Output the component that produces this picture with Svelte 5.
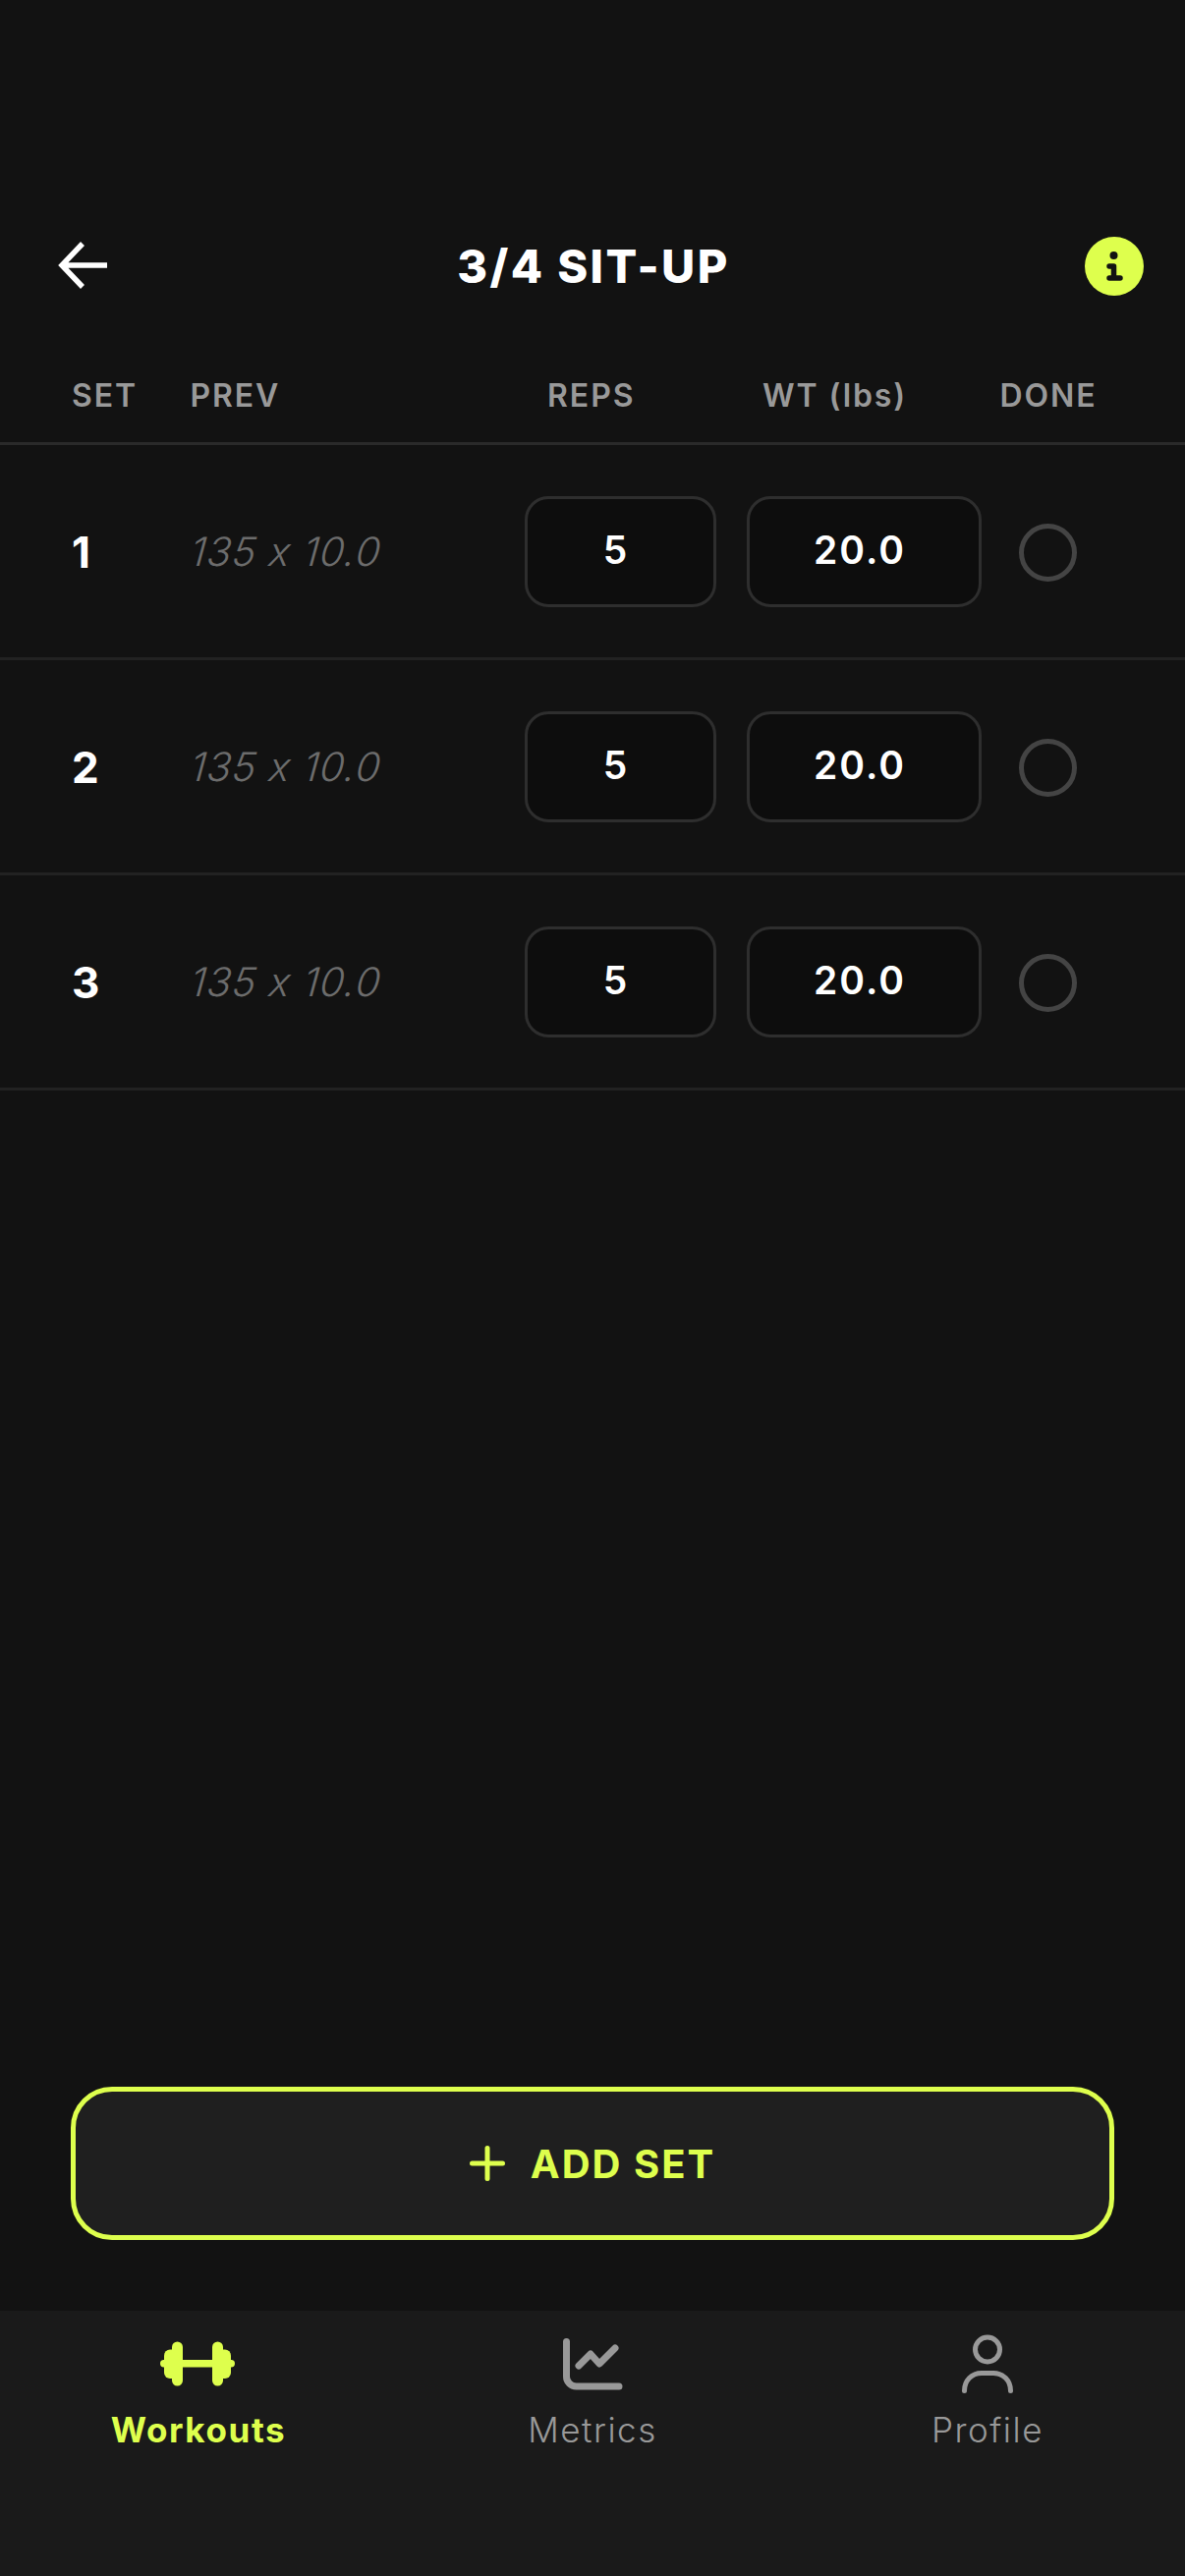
<script lang="ts">
  const sets = [
    { id: 1, prev: '135 x 10.0', reps: '5', weight: '20.0' },
    { id: 2, prev: '135 x 10.0', reps: '5', weight: '20.0' },
    { id: 3, prev: '135 x 10.0', reps: '5', weight: '20.0' },
  ]
</script>

<div class="page">
  <header class="topbar">
    <svg class="back" viewBox="0 0 52 50" width="52" height="50" aria-hidden="true">
      <path d="M51 25H5M26 3 5 25l21 22" />
    </svg>
    <h1>3/4 SIT-UP</h1>
    <svg class="info" viewBox="0 0 60 60" width="60" height="60" aria-hidden="true">
      <circle class="info-bg" cx="30" cy="30" r="30" />
      <circle class="info-dot" cx="29.5" cy="19" r="4" />
      <path class="info-i" d="M25 30h4.500v12M25 42h11" />
    </svg>
  </header>

  <div class="columns">
    <span>SET</span>
    <span>PREV</span>
    <span class="mid">REPS</span>
    <span class="mid">WT (lbs)</span>
    <span class="mid">DONE</span>
  </div>

  {#each sets as set (set.id)}
    <div class="row">
      <span class="num">{set.id}</span>
      <span class="prev">{set.prev}</span>
      <div class="field">{set.reps}</div>
      <div class="field">{set.weight}</div>
      <span class="check"></span>
    </div>
  {/each}

  <div class="spacer"></div>

  <button class="add">
    <svg viewBox="0 0 36 36" width="36" height="36" aria-hidden="true">
      <path d="M18 2.500v31M2.500 18h31" />
    </svg>
    <span>ADD SET</span>
  </button>

  <nav class="tabs">
    <div class="tab active">
      <svg class="icon" viewBox="0 0 76 46" width="76" height="46" aria-hidden="true">
        <rect x="0" y="19" width="76" height="7.500" rx="3.700" />
        <rect x="4" y="8.500" width="14" height="29.500" rx="6" />
        <rect x="12" y="0.500" width="11" height="45" rx="5.500" />
        <rect x="58" y="8.500" width="14" height="29.500" rx="6" />
        <rect x="53" y="0.500" width="11" height="45" rx="5.500" />
      </svg>
      <span>Workouts</span>
    </div>
    <div class="tab">
      <svg class="icon line" viewBox="0 0 66 58" width="66" height="58" aria-hidden="true">
        <path d="M6.500 6.500V42a10 10 0 0 0 10 10H60" />
        <path d="M19 31l12-12 9 10 16-16" />
      </svg>
      <span>Metrics</span>
    </div>
    <div class="tab">
      <svg class="icon profile" viewBox="0 0 60 66" width="60" height="66" aria-hidden="true">
        <circle cx="30" cy="18.500" r="12.500" />
        <path d="M6.500 60.500C6.500 50 14 42.500 24 42.500h12c10 0 17.500 7.500 17.500 18" />
      </svg>
      <span>Profile</span>
    </div>
  </nav>
</div>

<style>
  :global(body) {
    margin: 0;
    background: #121212;
  }
  .page {
    display: flex;
    flex-direction: column;
    height: 2622px;
    background: #121212;
    color: #fff;
    font-family: Inter, 'Liberation Sans', sans-serif;
    font-feature-settings: 'calt' 0;
    overflow: hidden;
  }
  .topbar {
    display: flex;
    align-items: center;
    justify-content: space-between;
    height: 120px;
    margin-top: 210px;
    padding: 0 42px 0 58px;
    position: relative;
  }
  .topbar h1 {
    position: absolute;
    left: 2px;
    right: 0;
    margin: 0;
    text-align: center;
    font-size: 47px;
    font-weight: 800;
    letter-spacing: 2.400px;
  }
  .back path {
    fill: none;
    stroke: #fff;
    stroke-width: 5.500;
  }
  .info {
    margin-top: 2px;
  }
  .info-bg {
    fill: #deff4d;
  }
  .info-dot {
    fill: #121212;
  }
  .info-i {
    fill: none;
    stroke: #121212;
    stroke-width: 5.500;
    stroke-linecap: round;
    stroke-linejoin: round;
  }
  .columns {
    display: grid;
    grid-template-columns: 120.500px 310px 196.500px 299px 136px;
    align-items: center;
    box-sizing: border-box;
    height: 123px;
    padding: 25px 0 0 73px;
    border-bottom: 3px solid #2a2a2a;
    font-size: 32px;
    font-weight: 600;
    letter-spacing: 1.900px;
    color: #999;
  }
  .mid {
    text-align: center;
  }
  .row {
    display: grid;
    grid-template-columns: 90px 309px 195px 239px 72px;
    column-gap: 31px;
    align-items: center;
    height: 216px;
    padding-left: 73px;
    border-bottom: 3px solid #222;
  }
  .num {
    margin-top: 2px;
    font-size: 44px;
    font-weight: 650;
  }
  .prev {
    display: inline-block;
    transform: skewX(-6deg);
    font-size: 40.500px;
    font-weight: 300;
    font-style: italic;
    letter-spacing: 1px;
    color: #6c6c6c;
  }
  .field {
    display: flex;
    align-items: center;
    justify-content: center;
    box-sizing: border-box;
    height: 113px;
    padding: 0 9px 3px 0;
    background: #0d0d0d;
    border: 3px solid #2e2e2e;
    border-radius: 24px;
    font-size: 39px;
    font-weight: 600;
    letter-spacing: 2px;
  }
  .check {
    box-sizing: border-box;
    justify-self: center;
    width: 59px;
    height: 59px;
    margin-top: 2px;
    border: 5px solid #444;
    border-radius: 50%;
  }
  .spacer {
    flex: 1;
  }
  .add {
    display: flex;
    align-items: center;
    justify-content: center;
    gap: 26px;
    box-sizing: border-box;
    height: 156px;
    margin: 0 72px 72px;
    background: #1f1f1f;
    border: 5px solid #deff4d;
    border-radius: 42px;
    color: #deff4d;
    font-family: inherit;
    font-feature-settings: inherit;
    font-size: 40px;
    font-weight: 700;
    letter-spacing: 2px;
  }
  .add path {
    fill: none;
    stroke: #deff4d;
    stroke-width: 5;
    stroke-linecap: round;
  }
  .tabs {
    display: grid;
    grid-template-columns: repeat(3, 1fr);
    height: 270px;
    background: #1a1a1a;
  }
  .tab {
    display: flex;
    flex-direction: column;
    align-items: center;
    padding-top: 21px;
    font-size: 35px;
    font-weight: 350;
    letter-spacing: 1.500px;
    color: #999;
  }
  .tab .icon {
    height: 66px;
    margin-bottom: 13px;
  }
  .tab.active {
    padding-left: 2px;
    color: #deff4d;
    font-weight: 650;
    letter-spacing: 1.600px;
  }
  .tab.active .icon {
    margin-left: -2px;
  }
  .tab.active rect {
    fill: #deff4d;
  }
  .line path {
    fill: none;
    stroke: #999;
    stroke-width: 7;
    stroke-linecap: round;
    stroke-linejoin: round;
  }
  .profile circle,
  .profile path {
    fill: none;
    stroke: #999;
    stroke-width: 5;
    stroke-linecap: round;
  }
</style>
